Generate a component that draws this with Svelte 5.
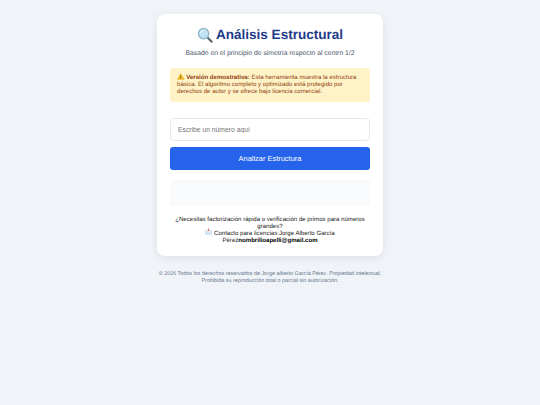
<script>
  let numero = $state("");
</script>

<main class="page">
  <section class="card">
    <h1>
      <svg class="icon-search" viewBox="0 0 16 16" aria-hidden="true">
        <line x1="10" y1="10" x2="14.6" y2="14.6" stroke="#5f6b73" stroke-width="2.2" stroke-linecap="round" />
        <circle cx="6.6" cy="6.6" r="5.2" fill="#bfe3f5" stroke="#8fb4c8" stroke-width="1.3" />
        <path d="M3.6 6.2a3.2 3.2 0 0 1 2.6-2.6" fill="none" stroke="#fff" stroke-width="1" />
      </svg>
      Análisis Estructural
    </h1>
    <p class="subtitle">Basado en el principio de simetría respecto al centro 1/2</p>

    <div class="notice">
      <svg class="icon-warn" viewBox="0 0 12 11" aria-hidden="true">
        <path d="M6 .6 11.6 10.4H.4Z" fill="#f5b921" stroke="#e8a70f" stroke-width=".5" stroke-linejoin="round" />
        <rect x="5.5" y="3.8" width="1" height="3.6" fill="#4a3a12" />
        <rect x="5.5" y="8" width="1" height="1" fill="#4a3a12" />
      </svg>
      <strong>Versión demostrativa:</strong> Esta herramienta muestra la estructura básica. El algoritmo completo y optimizado está protegido por derechos de autor y se ofrece bajo licencia comercial.
    </div>

    <input type="text" placeholder="Escribe un número aquí" bind:value={numero} />
    <button type="button">Analizar Estructura</button>

    <div class="result"></div>

    <div class="contact">
      ¿Necesitas factorización rápida o verificación de primos para números grandes?<br />
      <svg class="icon-mail" viewBox="0 0 12 12" aria-hidden="true">
        <rect x=".8" y="4.6" width="10.4" height="6.8" fill="#d5e6f3" stroke="#a9c3d8" stroke-width=".5" />
        <path d="M.8 4.6 6 8.6l5.2-4" fill="#eef5fb" stroke="#a9c3d8" stroke-width=".5" />
        <rect x="5.4" y=".6" width="1.2" height="3.4" fill="#d9534f" />
        <path d="M4.2 3.2h3.6L6 5.4Z" fill="#d9534f" />
      </svg>
      Contacto para licencias:Jorge Alberto García Pérez<strong>nombrilioapelli@gmail.com</strong>
    </div>
  </section>

  <footer>
    © 2026 Todos los derechos reservados de Jorge alberto García Pérez. Propiedad intelectual.<br />
    Prohibida su reproducción total o parcial sin autorización.
  </footer>
</main>

<style>
  :global(body) {
    margin: 0;
    background: #f0f4f8;
    font-family: "Liberation Sans", Arial, sans-serif;
    text-rendering: geometricPrecision;
  }

  .page {
    display: flex;
    flex-direction: column;
    align-items: center;
    min-height: 405px;
    padding-top: 14px;
    box-sizing: border-box;
  }

  .card {
    width: 226px;
    box-sizing: border-box;
    padding: 12px 13px;
    background: #fff;
    border-radius: 8px;
    box-shadow: 0 2px 8px rgba(0, 0, 0, 0.08);
    text-align: center;
  }

  h1 {
    display: flex;
    justify-content: center;
    align-items: center;
    gap: 3px;
    margin: 0 0 5px;
    font-size: 13.55px;
    line-height: 18px;
    color: #1e3a8a;
  }

  .icon-search {
    width: 16px;
    height: 16px;
  }

  .subtitle {
    margin: 0 0 10px;
    font-size: 6.77px;
    line-height: 9px;
    color: #475569;
  }

  .notice {
    padding: 4.5px 7px 7px;
    background: #fef3c7;
    border-radius: 3px;
    font-size: 6.09px;
    line-height: 7px;
    color: #92400e;
    text-align: left;
    margin-bottom: 16px;
  }

  .icon-warn {
    width: 7.5px;
    height: 7px;
    vertical-align: -1px;
  }

  input {
    display: block;
    width: 100%;
    height: 23px;
    box-sizing: border-box;
    padding: 0 7px;
    border: 1px solid #e2e8f0;
    border-radius: 4px;
    background: #fff;
    font: 6.77px "Liberation Sans", Arial, sans-serif;
    margin-bottom: 6px;
  }

  input::placeholder {
    color: #757575;
  }

  button {
    display: block;
    width: 100%;
    height: 23px;
    padding: 0;
    border: none;
    border-radius: 3px;
    background: #2563eb;
    color: #fff;
    font: 7.44px "Liberation Sans", Arial, sans-serif;
    margin-bottom: 10px;
  }

  .result {
    height: 26px;
    background: #f8fafc;
    border-radius: 3px;
    margin-bottom: 10px;
  }

  .contact {
    font-size: 6.09px;
    line-height: 7px;
    color: #222;
  }

  .contact strong {
    color: #000;
  }

  .icon-mail {
    width: 7px;
    height: 7px;
    margin-top: -2px;
    vertical-align: middle;
  }

  footer {
    margin-top: 15px;
    font-size: 5.42px;
    line-height: 7px;
    color: #64748b;
    text-align: center;
  }
</style>
